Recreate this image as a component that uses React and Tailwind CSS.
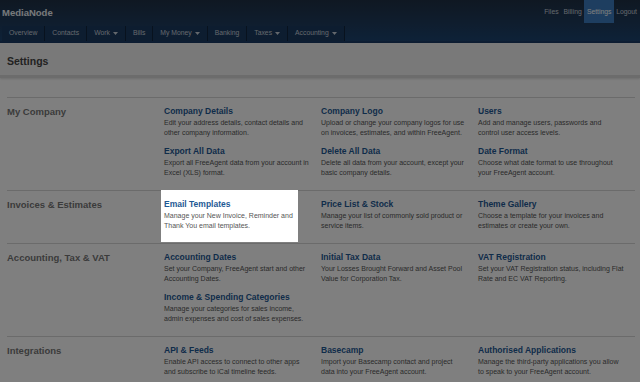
import React from 'react'

const navItems = [
  { label: 'Overview' },
  { label: 'Contacts' },
  { label: 'Work', menu: true },
  { label: 'Bills' },
  { label: 'My Money', menu: true },
  { label: 'Banking' },
  { label: 'Taxes', menu: true },
  { label: 'Accounting', menu: true },
]

const sections = [
  {
    label: 'My Company',
    cols: [
      [
        { title: 'Company Details', lines: ['Edit your address details, contact details and', 'other company information.'] },
        { title: 'Export All Data', lines: ['Export all FreeAgent data from your account in', 'Excel (XLS) format.'] },
      ],
      [
        { title: 'Company Logo', lines: ['Upload or change your company logos for use', 'on invoices, estimates, and within FreeAgent.'] },
        { title: 'Delete All Data', lines: ['Delete all data from your account, except your', 'basic company details.'] },
      ],
      [
        { title: 'Users', lines: ['Add and manage users, passwords and', 'control user access levels.'] },
        { title: 'Date Format', lines: ['Choose what date format to use throughout', 'your FreeAgent account.'] },
      ],
    ],
  },
  {
    label: 'Invoices & Estimates',
    cols: [
      [{ title: 'Email Templates', lines: ['Manage your New Invoice, Reminder and', 'Thank You email templates.'], focus: true }],
      [{ title: 'Price List & Stock', lines: ['Manage your list of commonly sold product or', 'service items.'] }],
      [{ title: 'Theme Gallery', lines: ['Choose a template for your invoices and', 'estimates or create your own.'] }],
    ],
  },
  {
    label: 'Accounting, Tax & VAT',
    cols: [
      [
        { title: 'Accounting Dates', lines: ['Set your Company, FreeAgent start and other', 'Accounting Dates.'] },
        { title: 'Income & Spending Categories', lines: ['Manage your categories for sales income,', 'admin expenses and cost of sales expenses.'] },
      ],
      [{ title: 'Initial Tax Data', lines: ['Your Losses Brought Forward and Asset Pool', 'Value for Corporation Tax.'] }],
      [{ title: 'VAT Registration', lines: ['Set your VAT Registration status, including Flat', 'Rate and EC VAT Reporting.'] }],
    ],
  },
  {
    label: 'Integrations',
    cols: [
      [{ title: 'API & Feeds', lines: ['Enable API access to connect to other apps', 'and subscribe to iCal timeline feeds.'] }],
      [{ title: 'Basecamp', lines: ['Import your Basecamp contact and project', 'data into your FreeAgent account.'] }],
      [{ title: 'Authorised Applications', lines: ['Manage the third-party applications you allow', 'to speak to your FreeAgent account.'] }],
    ],
  },
]

function Caret() {
  return (
    <svg width="5" height="3" viewBox="0 0 5 3" className="ml-[3px]">
      <path d="M0 0h5L2.5 3z" fill="currentColor" />
    </svg>
  )
}

function Item({ item }) {
  const body = (
    <>
      <div className="text-[8.5px] leading-[11px] font-bold text-[#1e5994]">{item.title}</div>
      <div className="mt-[1px] text-[7px] leading-[10px] text-[#555]">
        {item.lines.map(l => <div key={l}>{l}</div>)}
      </div>
    </>
  )
  if (item.focus) {
    // spotlighted item sits above the dimming layer
    return (
      <div className="relative z-20 -ml-[3px] -mt-[9px] -mb-[11px] w-[137px] bg-white pl-[3px] pt-[9px] pb-[11px]">
        {body}
      </div>
    )
  }
  return <div>{body}</div>
}

export default function App() {
  return (
    <div className="relative h-[382px] overflow-hidden bg-white font-['Liberation_Sans',Arial,sans-serif]">
      <header className="h-[41px] bg-gradient-to-b from-[#1f3045] to-[#1c4470]">
        <div className="flex h-[26px] items-start justify-between">
          <div className="pl-[2px] pt-[7px] text-[9.5px] font-bold leading-[12px] text-[#eef2f6]">MediaNode</div>
          <div className="flex items-start pr-[3px] text-[6.8px] leading-[23px] text-[#c8d0da]">
            <span className="px-[2.5px]">Files</span>
            <span className="px-[2.5px]">Billing</span>
            <span className="h-[23px] w-[30px] bg-[#3c7dc0] text-center text-white">Settings</span>
            <span className="pl-[2px]">Logout</span>
          </div>
        </div>
        <nav className="flex h-[15px] pl-[2px]">
          {navItems.map(n => (
            <div
              key={n.label}
              className="flex items-center border-r border-[#10243c] bg-[#1a3a60] px-[7px] text-[6.8px] text-[#c8d0da]"
            >
              {n.label}
              {n.menu && <Caret />}
            </div>
          ))}
        </nav>
      </header>
      <div className="border-t-2 border-[#1a3a64]" />

      <div className="h-[35px] border-b-[3px] border-[#d8d8d8] bg-[#f2f2f2] px-[7px] pt-[12px] text-[10.5px] font-bold leading-[13px] text-[#444] shadow-[0_1px_2px_rgba(0,0,0,0.15)]">
        Settings
      </div>

      <main className="px-[7px] pt-[19px]">
        {sections.map(s => (
          <section key={s.label} className="grid grid-cols-[157px_157px_157px_157px] border-t border-[#d6d6d6] pt-[8px] pb-[12px] w-[628px]">
            <div className="text-[9.5px] font-bold leading-[11px] text-[#777]">{s.label}</div>
            {s.cols.map((col, i) => (
              <div key={i} className="flex flex-col gap-[8px]">
                {col.map(item => <Item key={item.title} item={item} />)}
              </div>
            ))}
          </section>
        ))}
      </main>

      <div className="absolute inset-0 z-10 bg-black/50" />
    </div>
  )
}
